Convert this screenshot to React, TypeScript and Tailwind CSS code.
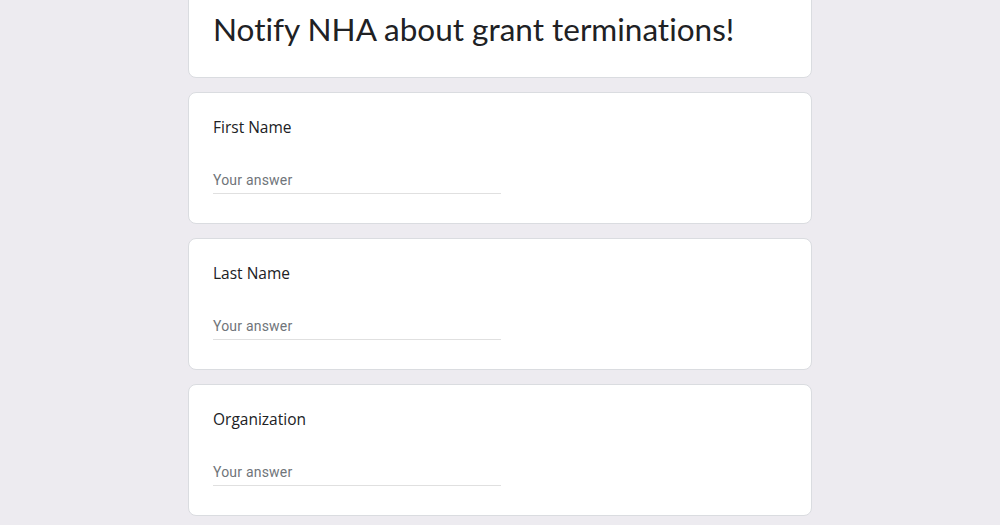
const questions = ["First Name", "Last Name", "Organization"];

function QuestionCard({ label }: { label: string }) {
  return (
    <div className="rounded-lg border border-[#dadce0] bg-white px-6 pt-[22px] pb-[29px]">
      <div className="font-['Open_Sans',sans-serif] text-[15.5px] leading-6 text-[#202124]">{label}</div>
      <div className="mt-[29px] w-[288px] border-b border-[#e0e0e0] pt-[2px] pb-[3px] font-['Roboto',sans-serif] text-sm leading-5 tracking-[0.2px] text-[#70757a]">
        Your answer
      </div>
    </div>
  );
}

export default function App() {
  return (
    <div className="h-[525px] overflow-hidden bg-[#edebf0]">
      <div className="mx-auto -mt-[40px] flex w-[624px] flex-col gap-[14px]">
        <div className="rounded-lg border border-[#dadce0] bg-white px-6 pt-[48px] pb-[28px]">
          <h1 className="font-['Lato',sans-serif] text-[31.5px] leading-10 text-[#202124] [font-variant-ligatures:none]">
            Notify NHA about grant terminations!
          </h1>
        </div>
        {questions.map((q) => (
          <QuestionCard key={q} label={q} />
        ))}
      </div>
    </div>
  );
}
